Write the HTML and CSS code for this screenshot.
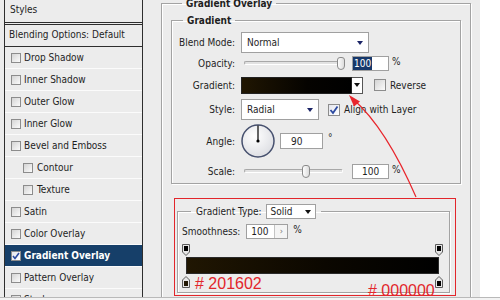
FILE: index.html
```html
<!DOCTYPE html>
<html lang="en">
<head>
    <meta charset="UTF-8">
    <title>Layer Style - Gradient Overlay</title>
    <link rel="stylesheet" href="styles.css">
</head>
<body>
    <div class="window">
        <div class="styles-panel">
            <div class="panel-head">Styles</div>
            <div class="panel-blend">Blending Options: Default</div>
            <ul class="effects">
                <li><span class="box"></span>Drop Shadow</li>
                <li><span class="box"></span>Inner Shadow</li>
                <li><span class="box"></span>Outer Glow</li>
                <li><span class="box"></span>Inner Glow</li>
                <li><span class="box"></span>Bevel and Emboss</li>
                <li class="sub"><span class="box"></span>Contour</li>
                <li class="sub"><span class="box"></span>Texture</li>
                <li><span class="box"></span>Satin</li>
                <li><span class="box"></span>Color Overlay</li>
                <li class="active"><span class="box checked"><svg width="8" height="8" viewBox="0 0 8 8"><path d="M1 4 L3 6.5 L7 1" fill="none" stroke="#2c4aa0" stroke-width="1.6"/></svg></span>Gradient Overlay</li>
                <li><span class="box"></span>Pattern Overlay</li>
                <li><span class="box"></span>Stroke</li>
            </ul>
        </div>

        <div class="options">
            <fieldset class="group overlay">
                <legend>Gradient Overlay</legend>

                <fieldset class="group gradient">
                    <legend>Gradient</legend>

                    <div class="row row-blend">
                        <span class="lbl">Blend Mode:</span>
                        <div class="select select-blend"><span>Normal</span><i class="caret"></i></div>
                    </div>

                    <div class="row row-opacity">
                        <span class="lbl">Opacity:</span>
                        <div class="slider">
                            <div class="groove"></div>
                            <div class="thumb thumb-opacity"></div>
                        </div>
                        <div class="field"><span class="picked">100</span></div>
                        <span class="unit">%</span>
                    </div>

                    <div class="row row-gradient">
                        <span class="lbl">Gradient:</span>
                        <div class="swatch"></div>
                        <div class="swatch-btn"><i class="caret dark"></i></div>
                        <span class="box box-reverse"></span>
                        <span class="check-text">Reverse</span>
                    </div>

                    <div class="row row-style">
                        <span class="lbl">Style:</span>
                        <div class="select select-style"><span>Radial</span><i class="caret"></i></div>
                        <span class="box box-align checked"><svg width="10" height="10" viewBox="0 0 10 10"><path d="M1.5 5 L4 8 L8.5 1.5" fill="none" stroke="#2c4aa0" stroke-width="1.8"/></svg></span>
                        <span class="check-text">Align with Layer</span>
                    </div>

                    <div class="row row-angle">
                        <span class="lbl">Angle:</span>
                        <svg class="dial" width="34" height="34" viewBox="0 0 34 34">
                            <defs>
                                <radialGradient id="dialFill" cx="0.4" cy="0.35" r="0.7">
                                    <stop offset="0" stop-color="#ffffff"/>
                                    <stop offset="1" stop-color="#dcdde2"/>
                                </radialGradient>
                            </defs>
                            <circle cx="17" cy="17" r="16" fill="url(#dialFill)" stroke="#46506e" stroke-width="1.5"/>
                            <line x1="17" y1="17" x2="17" y2="1.5" stroke="#000" stroke-width="1.2"/>
                            <circle cx="17" cy="17" r="1.6" fill="#000"/>
                        </svg>
                        <div class="field field-angle">90</div>
                        <span class="unit degree">°</span>
                    </div>

                    <div class="row row-scale">
                        <span class="lbl">Scale:</span>
                        <div class="slider">
                            <div class="groove"></div>
                            <div class="thumb thumb-scale"></div>
                        </div>
                        <div class="field">100</div>
                        <span class="unit">%</span>
                    </div>
                </fieldset>

                <div class="callout">
                    <fieldset class="group editor">
                        <legend>
                            <span>Gradient Type:</span>
                            <div class="select select-type"><span>Solid</span><i class="caret dark"></i></div>
                        </legend>

                        <div class="row row-smooth">
                            <span>Smoothness:</span>
                            <div class="field field-smooth"><span>100</span><span class="stepper">&#8250;</span></div>
                            <span class="unit">%</span>
                        </div>

                        <div class="ramp">
                            <div class="stops">
                                <svg width="8" height="12" viewBox="0 0 8 12"><path d="M0.5 0.5 H7.5 V8 L4 11.5 L0.5 8 Z" fill="#e6e6e6" stroke="#5c5c5c"/><rect x="2" y="2" width="4" height="5" fill="#000"/></svg>
                                <svg width="8" height="12" viewBox="0 0 8 12"><path d="M0.5 0.5 H7.5 V8 L4 11.5 L0.5 8 Z" fill="#e6e6e6" stroke="#5c5c5c"/><rect x="2" y="2" width="4" height="5" fill="#000"/></svg>
                            </div>
                            <div class="bar"></div>
                            <div class="stops stops-low">
                                <svg width="8" height="12" viewBox="0 0 8 12"><path d="M4 0.5 L7.5 4 V11.5 H0.5 V4 Z" fill="#e6e6e6" stroke="#5c5c5c"/><rect x="2" y="5" width="4" height="5" fill="#201602"/></svg>
                                <svg width="8" height="12" viewBox="0 0 8 12"><path d="M4 0.5 L7.5 4 V11.5 H0.5 V4 Z" fill="#e6e6e6" stroke="#5c5c5c"/><rect x="2" y="5" width="4" height="5" fill="#000"/></svg>
                            </div>
                        </div>
                    </fieldset>
                    <span class="note note-start"># 201602</span>
                    <span class="note note-end"># 000000</span>
                </div>
            </fieldset>
        </div>

        <div class="edge"></div>
    </div>

    <svg class="pointer" width="500" height="300" viewBox="0 0 500 300">
        <path d="M416 197 Q386 128 353 99" fill="none" stroke="#e8262c" stroke-width="1.2"/>
        <path d="M349 95 L360 101.5 L354 106.5 Z" fill="#e8262c"/>
    </svg>
</body>
</html>
```

FILE: styles.css
```css
* {
    box-sizing: border-box;
}
body {
    margin: 0;
    width: 500px;
    height: 300px;
    overflow: hidden;
    position: relative;
    background: #f3f3f3;
    font-family: "DejaVu Sans Condensed", "DejaVu Sans", sans-serif;
    font-size: 10px;
    color: #1e1e1e;
}
.window {
    display: flex;
    height: 298px;
    background: #ececec;
    border-bottom: 1px solid #b9b9b9;
    overflow: hidden;
}

/* left list of styles */
.styles-panel {
    flex: 0 0 139px;
    margin-left: 4px;
    border-left: 1px solid #2e2e2e;
    border-right: 1px solid #2e2e2e;
    background: #ececec;
}
.panel-head {
    height: 25px;
    padding: 4px 0 0 5px;
    border-bottom: 3px double #2e2e2e;
}
.panel-blend {
    height: 22px;
    padding: 4px 0 0 4px;
    border-bottom: 1px solid #2e2e2e;
}
.effects {
    list-style: none;
    margin: 0;
    padding: 0;
}
.effects li {
    display: flex;
    align-items: center;
    height: 22px;
    padding-left: 6px;
    border-bottom: 1px solid #fbfbfb;
}
.effects li.sub {
    padding-left: 18px;
}
.effects li .box {
    margin-right: 3px;
}
.effects li.sub .box {
    margin-right: 4px;
}
.effects li.active {
    background: #163f69;
    color: #fff;
    font-weight: bold;
}
.box {
    display: inline-flex;
    align-items: center;
    justify-content: center;
    flex: 0 0 auto;
    width: 10px;
    height: 10px;
    border: 1px solid #8c8c8c;
    background: linear-gradient(135deg, #d4d4d4, #fbfbfb);
}
.box.checked {
    background: linear-gradient(135deg, #e4e6ee, #ffffff);
}

/* right options area */
.options {
    flex: 0 0 337px;
}
.edge {
    flex: 1;
    background: #fff;
}
.group {
    min-width: 0;
    margin: 0;
    border: 1px solid #a3a3a3;
    box-shadow: inset 1px 1px 0 #fff, 1px 1px 0 #fff;
}
.group > legend {
    font-weight: bold;
    line-height: 13px;
    padding: 0 4px;
    margin-left: 11px;
}
.overlay {
    width: 310px;
    height: 310px;
    margin: -3px 0 0 18px;
    padding: 4px 9px 0;
}
.gradient {
    padding: 5px 0 5px;
}

.row {
    display: flex;
    align-items: center;
}
.lbl {
    width: 63px;
    margin-right: 6px;
    text-align: right;
}
.row-blend { height: 21px; }
.row-opacity { height: 14px; margin-top: 3px; }
.row-gradient { height: 16px; margin-top: 7px; }
.row-style { height: 21px; margin-top: 6px; }
.row-angle { height: 34px; margin-top: 4px; }
.row-scale { height: 14px; margin-top: 6px; }

.select {
    display: flex;
    align-items: center;
    justify-content: space-between;
    background: #fff;
    border: 1px solid #a0a0a0;
    padding: 0 5px 0 5px;
}
.select-blend { width: 128px; height: 21px; }
.select-style { width: 78px; height: 21px; }
.caret {
    width: 0;
    height: 0;
    border-left: 3.5px solid transparent;
    border-right: 3.5px solid transparent;
    border-top: 4px solid #1b2466;
}
.caret.dark {
    border-top-color: #111;
}

.slider {
    display: flex;
    align-items: center;
    width: 108px;
    height: 14px;
    margin-left: 3px;
}
.groove {
    flex: 0 0 99px;
    height: 4px;
    border: 1px solid #a8a8a8;
    border-bottom-color: #fff;
    border-right-color: #fff;
    border-radius: 2px;
    background: #e2e2e2;
}
.thumb {
    flex: 0 0 8px;
    height: 13px;
    border: 1px solid #8a8a8a;
    border-radius: 3px 3px 4px 4px;
    background: linear-gradient(to right, #fdfdfd, #dcdcdc);
}
.thumb-opacity { margin-left: -6px; }
.thumb-scale { margin-left: -41px; }

.field {
    display: flex;
    align-items: center;
    width: 37px;
    height: 15px;
    background: #fff;
    border: 1px solid #a0a0a0;
    padding-left: 9px;
}
.row-opacity .field {
    padding-left: 0;
}
.picked {
    background: #17386a;
    color: #fff;
    padding: 0 1px;
    line-height: 13px;
}
.unit {
    margin-left: 3px;
    align-self: flex-start;
}

.swatch {
    width: 111px;
    height: 17px;
    border: 1px solid #222;
    background: linear-gradient(to right, #201602, #050300 60%, #000);
}
.swatch-btn {
    display: flex;
    align-items: center;
    justify-content: center;
    width: 11px;
    height: 17px;
    border: 1px solid #555;
    border-left: 0;
    background: #fff;
}
.box-reverse {
    width: 12px;
    height: 12px;
    margin-left: 11px;
}
.box-align {
    width: 12px;
    height: 12px;
    margin-left: 9px;
}
.check-text {
    margin-left: 4px;
}
.field-angle {
    width: 43px;
    height: 16px;
    margin-left: 5px;
    padding-left: 10px;
}
.degree {
    margin-left: 5px;
    margin-top: 8px;
}

/* red callout around the gradient editor */
.callout {
    position: relative;
    width: 282px;
    height: 98px;
    margin: 14px 0 0 3px;
    padding: 5px 5px 0 2px;
    border: 1px solid #e2262b;
}
.editor {
    height: 89px;
    padding: 5px 0 0 4px;
    font-weight: normal;
}
.editor > legend {
    display: flex;
    align-items: center;
    font-weight: normal;
    line-height: 15px;
    margin-left: 9px;
    padding: 0 5px;
}
.select-type {
    width: 50px;
    height: 15px;
    margin-left: 4px;
    padding: 0 4px;
}
.row-smooth {
    height: 15px;
}
.field-smooth {
    width: 42px;
    margin-left: 6px;
    padding-left: 4px;
    justify-content: space-between;
}
.stepper {
    width: 13px;
    height: 13px;
    border-left: 1px solid #c4c4c4;
    color: #777;
    font-size: 9px;
    line-height: 12px;
    text-align: center;
    background: #f4f4f4;
}
.row-smooth .unit {
    margin-left: 5px;
}
.ramp {
    width: 261px;
    margin-top: 5px;
}
.stops {
    display: flex;
    justify-content: space-between;
    height: 12px;
}
.stops svg {
    display: block;
}
.bar {
    height: 17px;
    margin: 1px 4px 0;
    border: 1px solid #2a2a2a;
    background: linear-gradient(to right, #201602, #0b0700 55%, #000);
}
.stops-low {
    margin-top: 2px;
}
.note {
    position: absolute;
    font-family: "Liberation Sans", Arial, sans-serif;
    font-size: 16px;
    line-height: 18px;
    color: #e2262b;
}
.note-start {
    left: 20px;
    top: 76px;
}
.note-end {
    left: 193px;
    top: 83px;
}

.pointer {
    position: absolute;
    top: 0;
    left: 0;
    pointer-events: none;
}
```
